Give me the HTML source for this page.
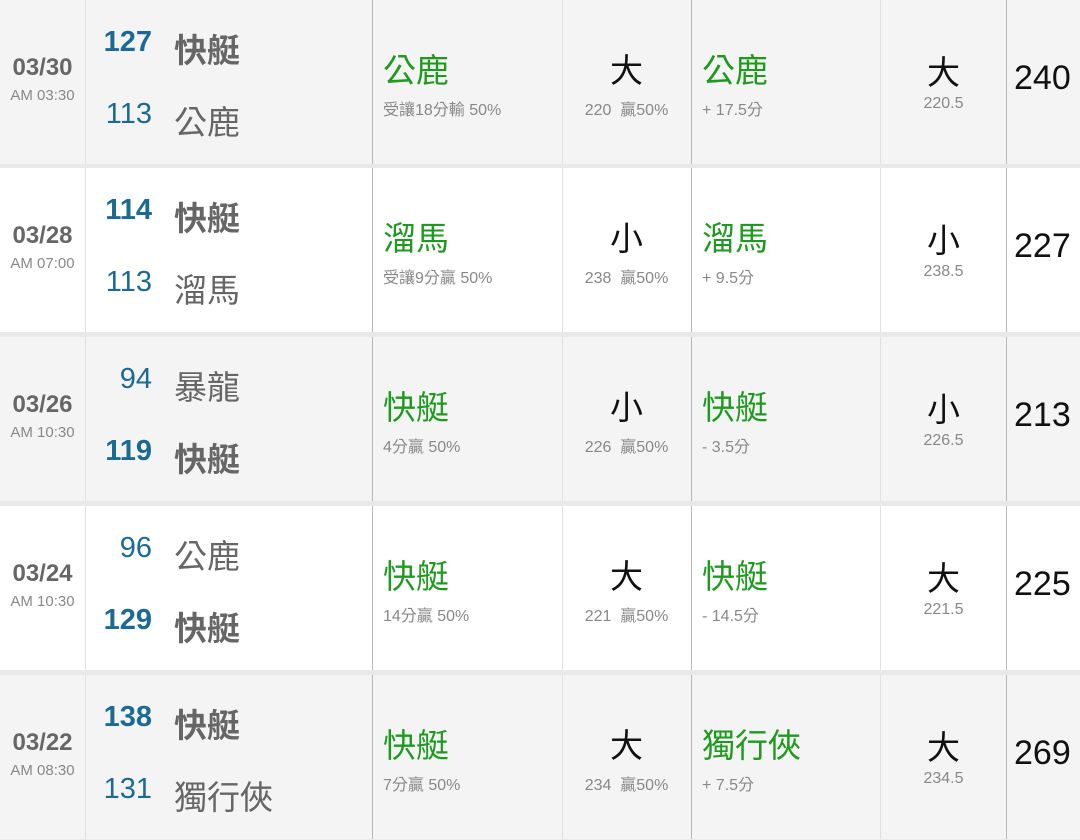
<!DOCTYPE html>
<html><head><meta charset="utf-8"><style>
*{margin:0;padding:0;box-sizing:border-box}
body{width:1080px;height:840px;background:#e9e9e9;font-family:"Liberation Sans","Noto Sans CJK TC",sans-serif;position:relative;overflow:hidden}
.row{position:absolute;left:0;width:1080px;height:164px}
.row.g{background:#f4f4f4}.row.w{background:#fff}
.row div{position:absolute;white-space:nowrap}
.vl{top:0;height:164px;width:1px;background:#e0e0e0}
.vd{background:#b8b8b8}
.date{left:0;width:85px;text-align:center;top:54px;font-size:24px;font-weight:bold;color:#666}
.time{left:0;width:85px;text-align:center;top:87px;font-size:15px;color:#888}
.sc{left:92px;width:60px;text-align:right;font-size:29px;color:#1b6a96}
.tm{left:174px;font-size:33px;color:#666}
.b{font-weight:bold}
.s1{top:26px}.s2{top:98px}
.tm.s1{top:24px}.tm.s2{top:96px}
.pick{font-size:33px;color:#1e9a1e;top:44px}
.sub{font-size:16px;color:#888;top:96px}
.ou{font-size:33px;color:#111;text-align:center;top:44px}
.ou6{top:46px!important}
.sub6{top:95px!important}
.tot{left:1014px;font-size:34px;color:#111;top:59px}
</style></head><body>

<div class="row g" style="top:0">
<div class="vl" style="left:85px"></div><div class="vl vd" style="left:372px"></div><div class="vl" style="left:562px"></div><div class="vl vd" style="left:691px"></div><div class="vl" style="left:880px"></div><div class="vl vd" style="left:1006px"></div>
<div class="date">03/30</div><div class="time">AM 03:30</div>
<div class="sc b s1">127</div><div class="tm b s1">快艇</div>
<div class="sc s2">113</div><div class="tm s2">公鹿</div>
<div class="pick" style="left:383px">公鹿</div><div class="sub" style="left:383px">受讓18分輸 50%</div>
<div class="ou" style="left:563px;width:127px">大</div><div class="sub" style="left:563px;width:127px;text-align:center">220&nbsp; 贏50%</div>
<div class="pick" style="left:702px">公鹿</div><div class="sub" style="left:702px">+ 17.5分</div>
<div class="ou ou6" style="left:881px;width:125px">大</div><div class="sub sub6" style="left:881px;width:125px;text-align:center">220.5</div>
<div class="tot">240</div>
</div>

<div class="row w" style="top:168px">
<div class="vl" style="left:85px"></div><div class="vl vd" style="left:372px"></div><div class="vl" style="left:562px"></div><div class="vl vd" style="left:691px"></div><div class="vl" style="left:880px"></div><div class="vl vd" style="left:1006px"></div>
<div class="date">03/28</div><div class="time">AM 07:00</div>
<div class="sc b s1">114</div><div class="tm b s1">快艇</div>
<div class="sc s2">113</div><div class="tm s2">溜馬</div>
<div class="pick" style="left:383px">溜馬</div><div class="sub" style="left:383px">受讓9分贏 50%</div>
<div class="ou" style="left:563px;width:127px">小</div><div class="sub" style="left:563px;width:127px;text-align:center">238&nbsp; 贏50%</div>
<div class="pick" style="left:702px">溜馬</div><div class="sub" style="left:702px">+ 9.5分</div>
<div class="ou ou6" style="left:881px;width:125px">小</div><div class="sub sub6" style="left:881px;width:125px;text-align:center">238.5</div>
<div class="tot">227</div>
</div>

<div class="row g" style="top:337px">
<div class="vl" style="left:85px"></div><div class="vl vd" style="left:372px"></div><div class="vl" style="left:562px"></div><div class="vl vd" style="left:691px"></div><div class="vl" style="left:880px"></div><div class="vl vd" style="left:1006px"></div>
<div class="date">03/26</div><div class="time">AM 10:30</div>
<div class="sc s1">94</div><div class="tm s1">暴龍</div>
<div class="sc b s2">119</div><div class="tm b s2">快艇</div>
<div class="pick" style="left:383px">快艇</div><div class="sub" style="left:383px">4分贏 50%</div>
<div class="ou" style="left:563px;width:127px">小</div><div class="sub" style="left:563px;width:127px;text-align:center">226&nbsp; 贏50%</div>
<div class="pick" style="left:702px">快艇</div><div class="sub" style="left:702px">- 3.5分</div>
<div class="ou ou6" style="left:881px;width:125px">小</div><div class="sub sub6" style="left:881px;width:125px;text-align:center">226.5</div>
<div class="tot">213</div>
</div>

<div class="row w" style="top:506px">
<div class="vl" style="left:85px"></div><div class="vl vd" style="left:372px"></div><div class="vl" style="left:562px"></div><div class="vl vd" style="left:691px"></div><div class="vl" style="left:880px"></div><div class="vl vd" style="left:1006px"></div>
<div class="date">03/24</div><div class="time">AM 10:30</div>
<div class="sc s1">96</div><div class="tm s1">公鹿</div>
<div class="sc b s2">129</div><div class="tm b s2">快艇</div>
<div class="pick" style="left:383px">快艇</div><div class="sub" style="left:383px">14分贏 50%</div>
<div class="ou" style="left:563px;width:127px">大</div><div class="sub" style="left:563px;width:127px;text-align:center">221&nbsp; 贏50%</div>
<div class="pick" style="left:702px">快艇</div><div class="sub" style="left:702px">- 14.5分</div>
<div class="ou ou6" style="left:881px;width:125px">大</div><div class="sub sub6" style="left:881px;width:125px;text-align:center">221.5</div>
<div class="tot">225</div>
</div>

<div class="row g" style="top:675px">
<div class="vl" style="left:85px"></div><div class="vl vd" style="left:372px"></div><div class="vl" style="left:562px"></div><div class="vl vd" style="left:691px"></div><div class="vl" style="left:880px"></div><div class="vl vd" style="left:1006px"></div>
<div class="date">03/22</div><div class="time">AM 08:30</div>
<div class="sc b s1">138</div><div class="tm b s1">快艇</div>
<div class="sc s2">131</div><div class="tm s2">獨行俠</div>
<div class="pick" style="left:383px">快艇</div><div class="sub" style="left:383px">7分贏 50%</div>
<div class="ou" style="left:563px;width:127px">大</div><div class="sub" style="left:563px;width:127px;text-align:center">234&nbsp; 贏50%</div>
<div class="pick" style="left:702px">獨行俠</div><div class="sub" style="left:702px">+ 7.5分</div>
<div class="ou ou6" style="left:881px;width:125px">大</div><div class="sub sub6" style="left:881px;width:125px;text-align:center">234.5</div>
<div class="tot">269</div>
</div>

</body></html>
